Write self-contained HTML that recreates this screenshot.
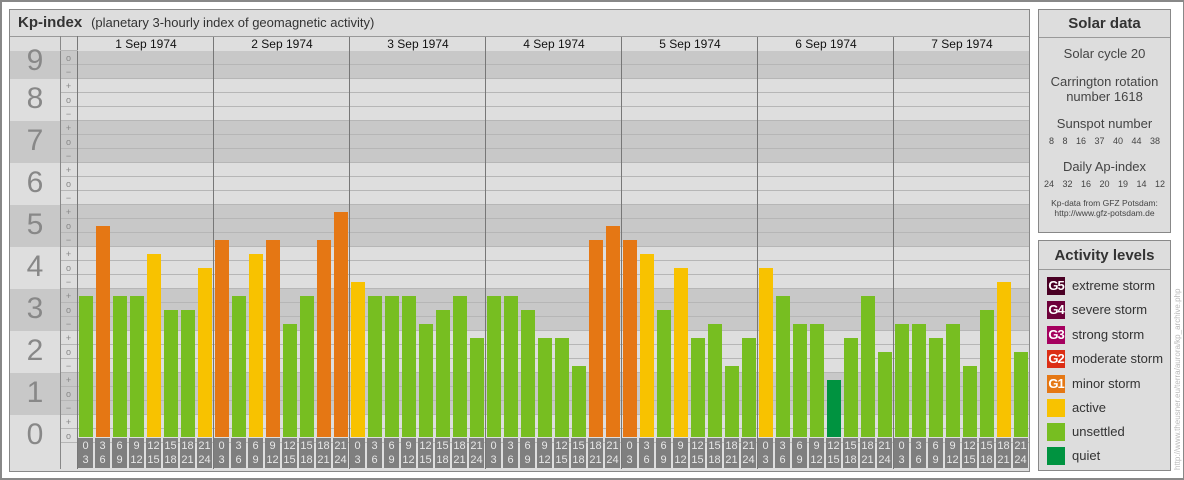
<!DOCTYPE html>
<html><head><meta charset="utf-8"><style>
*{margin:0;padding:0;box-sizing:border-box}
body{width:1184px;height:480px;background:#fff;position:relative;overflow:hidden;font-family:"Liberation Sans",sans-serif;}
.a{position:absolute}
#outer{left:0;top:0;width:1184px;height:480px;border:2px solid #888;border-right-width:1px}
#main{left:9px;top:9px;width:1021px;height:463px;border:1px solid #888;background:#ddd}
.b{position:absolute;width:14px}
.g{background:#77be21}.o{background:#e57714}.y{background:#f8c200}.q{background:#009340}
.l{position:absolute;top:438px;width:15px;height:30px;background:#7f7f7f;color:#e8e8e8;font-size:11px;line-height:14px;text-align:center;padding-top:1px}
.n{position:absolute;left:10px;width:50px;text-align:center;color:#888;font-size:30px}
.s{position:absolute;left:60px;width:17px;text-align:center;color:#888;font-size:9px;height:14px;line-height:14px}
.d{position:absolute;top:37px;width:136px;text-align:center;font-size:12px;line-height:14px;color:#111}
.vl{position:absolute;top:37px;width:1px;height:432px;background:#777}
.box{position:absolute;left:1038px;width:133px;border:1px solid #888;background:#ddd;text-align:center;color:#444}
.hd{font-weight:bold;font-size:15px;border-bottom:1px solid #999;color:#333}
.lg{position:absolute;left:8px;width:18px;height:18px;color:#fff;font-size:13px;font-weight:bold;line-height:18px;text-align:center;letter-spacing:-1px}
.lt{position:absolute;left:33px;font-size:13px;color:#333;line-height:18px;white-space:nowrap;text-align:left}
</style></head><body>
<div class="a" id="outer"></div>
<div class="a" id="main"></div>
<div class="a" style="left:10px;top:10px;width:1019px;height:27px;border-bottom:1px solid #999;background:#ddd;line-height:26px;padding-left:8px;color:#333"><b style="font-size:15px">Kp-index</b>&nbsp; <span style="font-size:13px">(planetary 3-hourly index of geomagnetic activity)</span></div>
<div class="a" style="left:10px;top:51px;width:1019px;height:28px;background:#c8c8c8"></div>
<div class="a" style="left:10px;top:79px;width:1019px;height:42px;background:#dedede"></div>
<div class="a" style="left:10px;top:121px;width:1019px;height:42px;background:#c8c8c8"></div>
<div class="a" style="left:10px;top:163px;width:1019px;height:42px;background:#dedede"></div>
<div class="a" style="left:10px;top:205px;width:1019px;height:42px;background:#c8c8c8"></div>
<div class="a" style="left:10px;top:247px;width:1019px;height:42px;background:#dedede"></div>
<div class="a" style="left:10px;top:289px;width:1019px;height:42px;background:#c8c8c8"></div>
<div class="a" style="left:10px;top:331px;width:1019px;height:42px;background:#dedede"></div>
<div class="a" style="left:10px;top:373px;width:1019px;height:42px;background:#c8c8c8"></div>
<div class="a" style="left:10px;top:415px;width:1019px;height:28px;background:#dedede"></div>
<div class="a" style="left:10px;top:443px;width:1019px;height:28px;background:#dedede"></div>
<div class="a" style="left:60px;top:51px;width:969px;height:392px;background:repeating-linear-gradient(to bottom,transparent 0,transparent 13px,#b6b6b6 13px,#b6b6b6 14px)"></div>
<div class="a" style="left:60px;top:36px;width:1px;height:433px;background:#888"></div>
<div class="a" style="left:77px;top:36px;width:1px;height:433px;background:#777"></div>
<div class="a" style="left:60px;top:50px;width:969px;height:1px;background:#b6b6b6"></div>
<div class="n" style="top:44px">9</div><div class="n" style="top:82px">8</div><div class="n" style="top:124px">7</div><div class="n" style="top:166px">6</div><div class="n" style="top:208px">5</div><div class="n" style="top:250px">4</div><div class="n" style="top:292px">3</div><div class="n" style="top:334px">2</div><div class="n" style="top:376px">1</div><div class="n" style="top:418px">0</div>
<div class="s" style="top:51px">o</div><div class="s" style="top:65px">−</div>
<div class="s" style="top:79px">+</div><div class="s" style="top:93px">o</div><div class="s" style="top:107px">−</div>
<div class="s" style="top:121px">+</div><div class="s" style="top:135px">o</div><div class="s" style="top:149px">−</div>
<div class="s" style="top:163px">+</div><div class="s" style="top:177px">o</div><div class="s" style="top:191px">−</div>
<div class="s" style="top:205px">+</div><div class="s" style="top:219px">o</div><div class="s" style="top:233px">−</div>
<div class="s" style="top:247px">+</div><div class="s" style="top:261px">o</div><div class="s" style="top:275px">−</div>
<div class="s" style="top:289px">+</div><div class="s" style="top:303px">o</div><div class="s" style="top:317px">−</div>
<div class="s" style="top:331px">+</div><div class="s" style="top:345px">o</div><div class="s" style="top:359px">−</div>
<div class="s" style="top:373px">+</div><div class="s" style="top:387px">o</div><div class="s" style="top:401px">−</div>
<div class="s" style="top:415px">+</div><div class="s" style="top:429px">o</div>
<div class="a" style="left:78px;top:37px;width:951px;height:14px;background:#dedede"></div>
<div class="d" style="left:78px">1 Sep 1974</div><div class="d" style="left:214px">2 Sep 1974</div><div class="d" style="left:350px">3 Sep 1974</div><div class="d" style="left:486px">4 Sep 1974</div><div class="d" style="left:622px">5 Sep 1974</div><div class="d" style="left:758px">6 Sep 1974</div><div class="d" style="left:894px">7 Sep 1974</div>
<div class="vl" style="left:213px"></div><div class="vl" style="left:349px"></div><div class="vl" style="left:485px"></div><div class="vl" style="left:621px"></div><div class="vl" style="left:757px"></div><div class="vl" style="left:893px"></div>
<div class="b g" style="left:79px;top:296px;height:141px"></div><div class="b o" style="left:96px;top:226px;height:211px"></div><div class="b g" style="left:113px;top:296px;height:141px"></div><div class="b g" style="left:130px;top:296px;height:141px"></div><div class="b y" style="left:147px;top:254px;height:183px"></div><div class="b g" style="left:164px;top:310px;height:127px"></div><div class="b g" style="left:181px;top:310px;height:127px"></div><div class="b y" style="left:198px;top:268px;height:169px"></div>
<div class="b o" style="left:215px;top:240px;height:197px"></div><div class="b g" style="left:232px;top:296px;height:141px"></div><div class="b y" style="left:249px;top:254px;height:183px"></div><div class="b o" style="left:266px;top:240px;height:197px"></div><div class="b g" style="left:283px;top:324px;height:113px"></div><div class="b g" style="left:300px;top:296px;height:141px"></div><div class="b o" style="left:317px;top:240px;height:197px"></div><div class="b o" style="left:334px;top:212px;height:225px"></div>
<div class="b y" style="left:351px;top:282px;height:155px"></div><div class="b g" style="left:368px;top:296px;height:141px"></div><div class="b g" style="left:385px;top:296px;height:141px"></div><div class="b g" style="left:402px;top:296px;height:141px"></div><div class="b g" style="left:419px;top:324px;height:113px"></div><div class="b g" style="left:436px;top:310px;height:127px"></div><div class="b g" style="left:453px;top:296px;height:141px"></div><div class="b g" style="left:470px;top:338px;height:99px"></div>
<div class="b g" style="left:487px;top:296px;height:141px"></div><div class="b g" style="left:504px;top:296px;height:141px"></div><div class="b g" style="left:521px;top:310px;height:127px"></div><div class="b g" style="left:538px;top:338px;height:99px"></div><div class="b g" style="left:555px;top:338px;height:99px"></div><div class="b g" style="left:572px;top:366px;height:71px"></div><div class="b o" style="left:589px;top:240px;height:197px"></div><div class="b o" style="left:606px;top:226px;height:211px"></div>
<div class="b o" style="left:623px;top:240px;height:197px"></div><div class="b y" style="left:640px;top:254px;height:183px"></div><div class="b g" style="left:657px;top:310px;height:127px"></div><div class="b y" style="left:674px;top:268px;height:169px"></div><div class="b g" style="left:691px;top:338px;height:99px"></div><div class="b g" style="left:708px;top:324px;height:113px"></div><div class="b g" style="left:725px;top:366px;height:71px"></div><div class="b g" style="left:742px;top:338px;height:99px"></div>
<div class="b y" style="left:759px;top:268px;height:169px"></div><div class="b g" style="left:776px;top:296px;height:141px"></div><div class="b g" style="left:793px;top:324px;height:113px"></div><div class="b g" style="left:810px;top:324px;height:113px"></div><div class="b q" style="left:827px;top:380px;height:57px"></div><div class="b g" style="left:844px;top:338px;height:99px"></div><div class="b g" style="left:861px;top:296px;height:141px"></div><div class="b g" style="left:878px;top:352px;height:85px"></div>
<div class="b g" style="left:895px;top:324px;height:113px"></div><div class="b g" style="left:912px;top:324px;height:113px"></div><div class="b g" style="left:929px;top:338px;height:99px"></div><div class="b g" style="left:946px;top:324px;height:113px"></div><div class="b g" style="left:963px;top:366px;height:71px"></div><div class="b g" style="left:980px;top:310px;height:127px"></div><div class="b y" style="left:997px;top:282px;height:155px"></div><div class="b g" style="left:1014px;top:352px;height:85px"></div>
<div class="l" style="left:78px">0<br>3</div><div class="l" style="left:95px">3<br>6</div><div class="l" style="left:112px">6<br>9</div><div class="l" style="left:129px">9<br>12</div><div class="l" style="left:146px">12<br>15</div><div class="l" style="left:163px">15<br>18</div><div class="l" style="left:180px">18<br>21</div><div class="l" style="left:197px">21<br>24</div>
<div class="l" style="left:214px">0<br>3</div><div class="l" style="left:231px">3<br>6</div><div class="l" style="left:248px">6<br>9</div><div class="l" style="left:265px">9<br>12</div><div class="l" style="left:282px">12<br>15</div><div class="l" style="left:299px">15<br>18</div><div class="l" style="left:316px">18<br>21</div><div class="l" style="left:333px">21<br>24</div>
<div class="l" style="left:350px">0<br>3</div><div class="l" style="left:367px">3<br>6</div><div class="l" style="left:384px">6<br>9</div><div class="l" style="left:401px">9<br>12</div><div class="l" style="left:418px">12<br>15</div><div class="l" style="left:435px">15<br>18</div><div class="l" style="left:452px">18<br>21</div><div class="l" style="left:469px">21<br>24</div>
<div class="l" style="left:486px">0<br>3</div><div class="l" style="left:503px">3<br>6</div><div class="l" style="left:520px">6<br>9</div><div class="l" style="left:537px">9<br>12</div><div class="l" style="left:554px">12<br>15</div><div class="l" style="left:571px">15<br>18</div><div class="l" style="left:588px">18<br>21</div><div class="l" style="left:605px">21<br>24</div>
<div class="l" style="left:622px">0<br>3</div><div class="l" style="left:639px">3<br>6</div><div class="l" style="left:656px">6<br>9</div><div class="l" style="left:673px">9<br>12</div><div class="l" style="left:690px">12<br>15</div><div class="l" style="left:707px">15<br>18</div><div class="l" style="left:724px">18<br>21</div><div class="l" style="left:741px">21<br>24</div>
<div class="l" style="left:758px">0<br>3</div><div class="l" style="left:775px">3<br>6</div><div class="l" style="left:792px">6<br>9</div><div class="l" style="left:809px">9<br>12</div><div class="l" style="left:826px">12<br>15</div><div class="l" style="left:843px">15<br>18</div><div class="l" style="left:860px">18<br>21</div><div class="l" style="left:877px">21<br>24</div>
<div class="l" style="left:894px">0<br>3</div><div class="l" style="left:911px">3<br>6</div><div class="l" style="left:928px">6<br>9</div><div class="l" style="left:945px">9<br>12</div><div class="l" style="left:962px">12<br>15</div><div class="l" style="left:979px">15<br>18</div><div class="l" style="left:996px">18<br>21</div><div class="l" style="left:1013px">21<br>24</div>
<div class="box" style="top:9px;height:224px">
<div class="hd" style="height:28px;line-height:28px">Solar data</div>
<div style="font-size:13px;margin-top:8px;line-height:15px">Solar cycle 20</div>
<div style="font-size:13px;margin-top:13px;line-height:15px">Carrington rotation<br>number 1618</div>
<div style="font-size:13px;margin-top:12px;line-height:15px">Sunspot number</div>
<div style="font-size:9px;margin-top:5px;word-spacing:6px;line-height:11px">8 8 16 37 40 44 38</div>
<div style="font-size:13px;margin-top:12px;line-height:15px">Daily Ap-index</div>
<div style="font-size:9px;margin-top:5px;word-spacing:6px;line-height:11px">24 32 16 20 19 14 12</div>
<div style="font-size:8.5px;margin-top:8px;line-height:10px">Kp-data from GFZ Potsdam:<br>http://www.gfz-potsdam.de</div>
</div>
<div class="box" style="top:240px;height:231px">
<div class="hd" style="height:29px;line-height:29px">Activity levels</div>
<div class="lg" style="top:36px;background:#4a0024">G5</div><div class="lt" style="top:36px">extreme storm</div>
<div class="lg" style="top:60px;background:#6d0039">G4</div><div class="lt" style="top:60px">severe storm</div>
<div class="lg" style="top:85px;background:#a5005f">G3</div><div class="lt" style="top:85px">strong storm</div>
<div class="lg" style="top:109px;background:#dc2d14">G2</div><div class="lt" style="top:109px">moderate storm</div>
<div class="lg" style="top:134px;background:#e57714">G1</div><div class="lt" style="top:134px">minor storm</div>
<div class="lg" style="top:158px;background:#f8c200"></div><div class="lt" style="top:158px">active</div>
<div class="lg" style="top:182px;background:#77be21"></div><div class="lt" style="top:182px">unsettled</div>
<div class="lg" style="top:206px;background:#009340"></div><div class="lt" style="top:206px">quiet</div>
</div>
<div class="a" style="left:1173px;top:470px;transform:rotate(-90deg);transform-origin:0 0;font-size:8px;color:#bbb;white-space:nowrap;width:240px;line-height:10px">http://www.theusner.eu/terra/aurora/kp_archive.php</div>
</body></html>
